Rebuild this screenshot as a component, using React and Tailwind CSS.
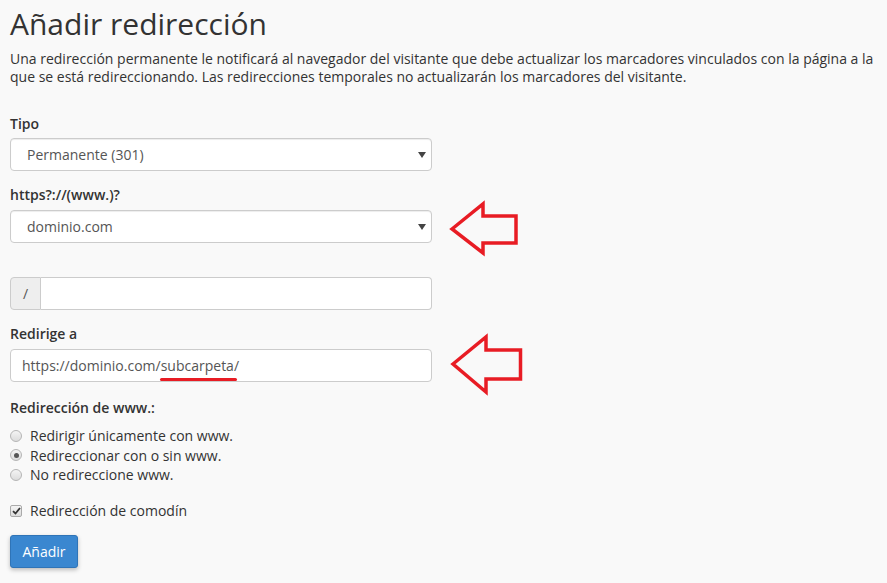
import React from "react";

const FONT = { fontFamily: '"Open Sans", "Liberation Sans", sans-serif' };

function Caret() {
  return (
    <svg width="8" height="6" viewBox="0 0 8 6" className="shrink-0">
      <path d="M0 0 L8 0 L4 6 Z" fill="#444" />
    </svg>
  );
}

function FakeSelect({ value }) {
  return (
    <div className="flex items-center justify-between h-[33px] w-[422px] bg-white border border-[#ccc] rounded-[4px] pl-[16px] pr-[5px] text-[14px] text-[#555] shadow-[inset_0_1px_1px_rgba(0,0,0,0.075)]">
      <span>{value}</span>
      <Caret />
    </div>
  );
}

function Radio({ checked, label }) {
  return (
    <label className="flex items-center gap-[8px] h-[19.5px] text-[14px] text-[#333]">
      <span className="w-[12px] h-[12px] rounded-full border border-[#b5b5b5] bg-gradient-to-b from-[#f4f4f4] to-[#dcdcdc] flex items-center justify-center ml-[10px]">
        {checked && <span className="w-[5px] h-[5px] rounded-full bg-[#555]" />}
      </span>
      <span>{label}</span>
    </label>
  );
}

function Arrow({ points }) {
  return (
    <polygon
      points={points}
      fill="none"
      stroke="#e81c24"
      strokeWidth="3.5"
      strokeLinejoin="miter"
    />
  );
}

export default function App() {
  return (
    <div className="relative min-h-[583px] bg-[#f9f9f9] text-[#333] px-[10px] pt-[4px]" style={FONT}>
      <h1 className="text-[30px] leading-[40px] font-normal text-[#333]">Añadir redirección</h1>
      <p className="mt-[6px] text-[14px] leading-[18px]">
        Una redirección permanente le notificará al navegador del visitante que debe actualizar los marcadores vinculados con la página a la que se está redireccionando. Las redirecciones temporales no actualizarán los marcadores del visitante.
      </p>

      {/* Tipo */}
      <div className="mt-[29px]">
        <div className="text-[14px] font-semibold leading-[18px]">Tipo</div>
        <div className="mt-[5px]">
          <FakeSelect value="Permanente (301)" />
        </div>
      </div>

      <div className="mt-[15px]">
        <div className="text-[14px] font-semibold leading-[18px]">https?://(www.)?</div>
        <div className="mt-[6px]">
          <FakeSelect value="dominio.com" />
        </div>
      </div>

      {/* Ruta */}
      <div className="mt-[34px] flex h-[33px] w-[422px]">
        <div className="w-[31px] flex items-center justify-center bg-[#eee] border border-[#ccc] rounded-l-[4px] text-[14px] text-[#555]">
          /
        </div>
        <div className="flex-1 bg-white border border-l-0 border-[#ccc] rounded-r-[4px]" />
      </div>

      <div className="mt-[15px]">
        <div className="text-[14px] font-semibold leading-[18px]">Redirige a</div>
        <div className="relative mt-[6px] h-[33px] w-[422px] bg-white border border-[#ccc] rounded-[4px] flex items-center pl-[11px] text-[14px] text-[#555]">
          https://dominio.com/subcarpeta/
          <span className="absolute left-[149px] top-[28px] w-[77px] h-[3px] rounded-full bg-[#e81c24]" />
        </div>
      </div>

      {/* www */}
      <div className="mt-[17px] text-[14px] font-semibold leading-[18px]">Redirección de www.:</div>
      <div className="mt-[9px] flex flex-col -ml-[10px]">
        <Radio label="Redirigir únicamente con www." />
        <Radio checked label="Redireccionar con o sin www." />
        <Radio label="No redireccione www." />
      </div>

      <label className="mt-[16px] flex items-center gap-[8px] h-[20px] text-[14px]">
        <span className="w-[12px] h-[12px] rounded-[2px] border border-[#aaa] bg-gradient-to-b from-[#f4f4f4] to-[#dcdcdc] flex items-center justify-center">
          <svg width="9" height="8" viewBox="0 0 9 8">
            <path d="M1 4.2 L3.5 6.5 L8 1" fill="none" stroke="#333" strokeWidth="1.8" />
          </svg>
        </span>
        <span>Redirección de comodín</span>
      </label>

      <button className="mt-[14px] h-[33px] w-[68px] bg-[#3a87d0] border border-[#2f74b7] rounded-[3px] text-white text-[14px] shadow-[0_2px_4px_rgba(0,0,0,0.25)]">
        Añadir
      </button>

      {/* Flechas de anotación */}
      <svg className="absolute left-0 top-0 pointer-events-none" width="887" height="583">
        <Arrow points="452,229 483,204 483,216 516,216 516,243 483,243 483,253" />
        <Arrow points="453,364 486,337 486,350 520.5,350 520.5,379 486,379 486,392" />
      </svg>
    </div>
  );
}
